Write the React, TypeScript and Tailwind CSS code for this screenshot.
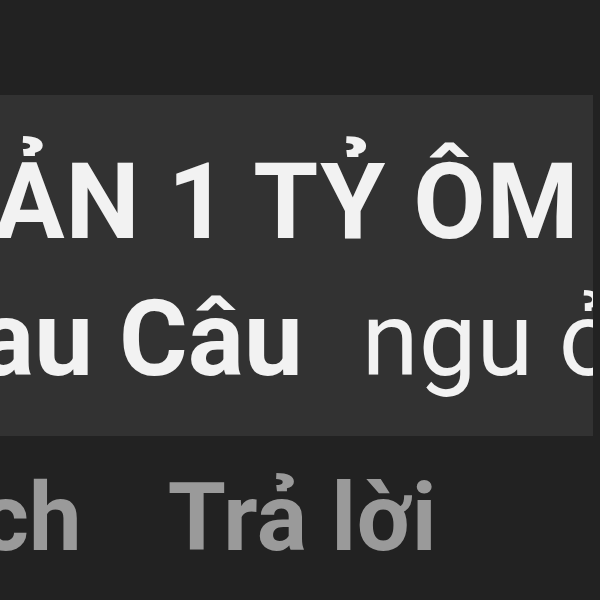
export default function App() {
  return (
    <div className="w-[600px] h-[600px] overflow-hidden bg-[#222222] pt-[95px]" style={{ fontFamily: "Roboto, 'Noto Sans', sans-serif" }}>
      <div className="w-[593px] h-[341px] bg-[#323232] pt-[39px] overflow-hidden">
        <div className="whitespace-nowrap ml-[-6px] text-[105px] leading-[137px] tracking-[1px] font-bold text-[#f2f2f2]">ẢN 1 TỶ ÔM</div>
        <div className="whitespace-nowrap ml-[-22px] text-[103px] leading-[137px] text-[#f2f2f2] flex items-baseline">
          <span className="font-bold text-[105px]">au Câu</span>
          <span className="ml-[59px]">ngu ở</span>
        </div>
      </div>
      <div className="mt-[35px] flex whitespace-nowrap text-[94px] leading-[94px] font-bold text-[#9a9a9a]">
        <span className="ml-[-20px]">ch</span>
        <span className="ml-[86px] tracking-[0.5px]">Trả lời</span>
      </div>
    </div>
  );
}
